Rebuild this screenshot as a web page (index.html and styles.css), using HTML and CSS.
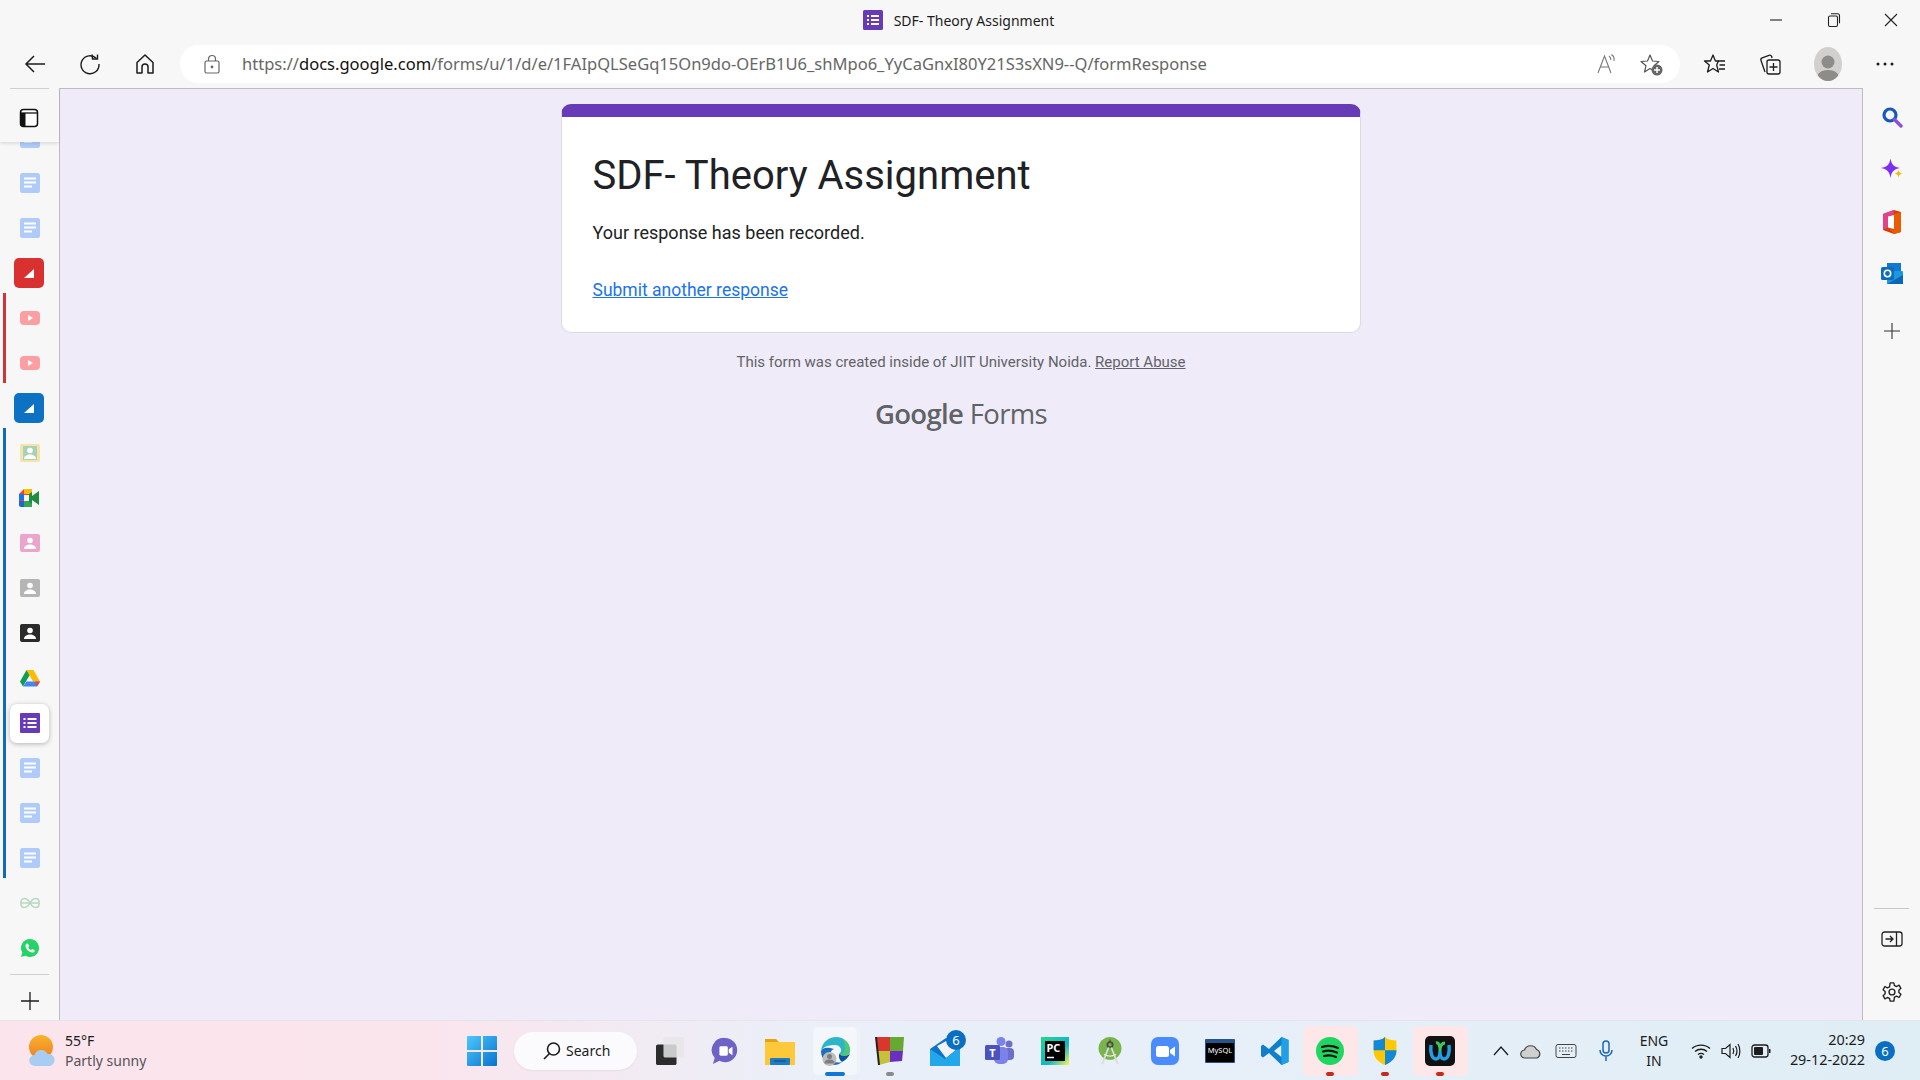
FILE: index.html
```html
<!DOCTYPE html>
<html lang="en">
<head>
  <meta charset="UTF-8" />
  <title>SDF- Theory Assignment</title>
  <link rel="stylesheet" href="styles.css">
</head>
<body>

  <!-- icons used more than once -->
  <svg class="sprite" xmlns="http://www.w3.org/2000/svg">
    <symbol id="i-doc" viewBox="0 0 20 20">
      <rect width="20" height="20" rx="2.5" fill="#aecbfa"/>
      <path d="M4 5.5h12M4 9.5h12M4 13.5h8" stroke="#fff" stroke-width="2"/>
    </symbol>
    <symbol id="i-tube" viewBox="0 0 20 14">
      <rect width="20" height="14" rx="4" fill="#fb9fa3"/>
      <path d="M8 4l5 3-5 3z" fill="#fff"/>
    </symbol>
    <symbol id="i-contact" viewBox="0 0 20 18">
      <rect width="20" height="18" rx="2" fill="currentColor"/>
      <circle cx="10" cy="6.5" r="2.8" fill="#fff"/>
      <path d="M4 15c0-3 3-4.5 6-4.5s6 1.500 6 4.500z" fill="#fff"/>
    </symbol>
    <symbol id="i-corner" viewBox="0 0 30 30">
      <rect width="30" height="30" rx="5" fill="currentColor"/>
      <path d="M10 20l10-9v9z" fill="#fff"/>
    </symbol>
  </svg>

  <header class="titlebar">
    <div class="window-title">
      <svg class="ico-20" viewBox="0 0 20 20"><rect width="20" height="20" rx="1.500" fill="#673ab7"/><path d="M8 6h8M8 10h8M8 14h8" stroke="#fff" stroke-width="1.800"/><path d="M4 6h2M4 10h2M4 14h2" stroke="#fff" stroke-width="1.800"/></svg>
      <span>SDF- Theory Assignment</span>
    </div>
    <div class="window-controls">
      <button class="win-btn"><svg class="ico-16" viewBox="0 0 16 16"><path d="M2 8h12" stroke="#222" stroke-width="1.100"/></svg></button>
      <button class="win-btn"><svg class="ico-16" viewBox="0 0 16 16"><rect x="2.500" y="4" width="9" height="10.500" rx="1.500" fill="none" stroke="#222" stroke-width="1.100"/><path d="M5 1.800h6.500a2 2 0 0 1 2 2v7.500" fill="none" stroke="#222" stroke-width="1.100"/></svg></button>
      <button class="win-btn"><svg class="ico-16" viewBox="0 0 16 16"><path d="M2 2l12 12M14 2L2 14" stroke="#222" stroke-width="1.100"/></svg></button>
    </div>
  </header>

  <nav class="toolbar">
    <button class="tool-btn"><svg class="ico-24" viewBox="0 0 24 24" fill="none" stroke="#1c1c1c" stroke-width="1.500"><path d="M22 12H3M11 4l-8 8 8 8"/></svg></button>
    <button class="tool-btn"><svg class="ico-24" viewBox="0 0 24 24" fill="none" stroke="#1c1c1c" stroke-width="1.400"><path d="M18.500 6.500A9 9 0 1 0 21 12"/><path d="M14 2.500l.5 4.500h5V2.500"/></svg></button>
    <button class="tool-btn"><svg class="ico-24" viewBox="0 0 24 24" fill="none" stroke="#1c1c1c" stroke-width="1.500"><path d="M4 21V10.500L12 3l8 7.500V21h-5v-6a3 3 0 0 0-6 0v6z" stroke-linejoin="round"/></svg></button>

    <div class="address">
      <svg class="ico-20" viewBox="0 0 20 20" fill="none" stroke="#666" stroke-width="1.200"><rect x="3" y="7" width="14" height="12" rx="1.500"/><path d="M6.500 7V5a3.500 3.500 0 0 1 7 0v2"/><circle cx="10" cy="13" r=".8" fill="#666"/></svg>
      <div class="url"><span>https://</span><b>docs.google.com</b><span>/forms/u/1/d/e/1FAIpQLSeGq15On9do-OErB1U6_shMpo6_YyCaGnxI80Y21S3sXN9--Q/formResponse</span></div>
      <svg class="ico-24" viewBox="0 0 24 24" fill="none" stroke="#777" stroke-width="1.100"><path d="M3 21L9.500 4 16 21M5.500 15h8"/><path d="M14 4c1.500 1 2 2.500 1.800 4M16.500 2.500c2.200 1.500 3 4 2.500 6.500"/></svg>
      <svg class="ico-24" viewBox="0 0 24 24"><path d="M11 3l2.500 6 6.500.5-5 4.200 1.500 6.300L11 16.600 5.500 20 7 13.700 2 9.500 8.500 9z" fill="none" stroke="#555" stroke-width="1.200" stroke-linejoin="round"/><circle cx="18" cy="18" r="5.500" fill="#666"/><path d="M15 18h6M18 15v6" stroke="#fff" stroke-width="1.500"/></svg>
    </div>

    <div class="tool-group">
      <button class="tool-btn"><svg class="ico-24" viewBox="0 0 24 24" fill="none" stroke="#1c1c1c" stroke-width="1.300"><path d="M10 3l2.400 6h3l-1.700 4 1.800 7L10 16.500 4.500 20l1.800-7L1.500 9h6z" stroke-linejoin="round"/><path d="M15 9h7M16.500 13h5.500M16 17h6"/></svg></button>
      <button class="tool-btn tool-narrow"><svg class="ico-24" viewBox="0 0 24 24" fill="none" stroke="#1c1c1c" stroke-width="1.300"><rect x="9" y="8" width="13" height="14" rx="2"/><path d="M15.500 11v8M11.500 15h8"/><path d="M7 20L3 8.500c-.4-1.200 0-2.200 1.200-2.600L11 3.300c1.200-.4 2.200.2 2.700 1.200L14 6"/></svg></button>
      <div class="avatar"><svg viewBox="0 0 28 30"><circle cx="14" cy="11" r="6.500" fill="#8e8c89"/><path d="M2 30c0-8 6-11 12-11s12 3 12 11z" fill="#8e8c89"/></svg></div>
      <button class="tool-btn"><svg class="ico-24" viewBox="0 0 24 24" fill="#1c1c1c"><circle cx="5" cy="12" r="1.500"/><circle cx="12" cy="12" r="1.500"/><circle cx="19" cy="12" r="1.500"/></svg></button>
    </div>
  </nav>

  <div class="workspace">
    <aside class="sidebar">
      <div class="side-top">
        <svg class="ico-20" viewBox="0 0 20 20"><rect x="1.500" y="1.500" width="17" height="17" rx="3" fill="#fff" stroke="#111" stroke-width="1.500"/><path d="M1.500 5h17" stroke="#111" stroke-width="1.300"/><path d="M1.500 5h5v13.500h-2a3 3 0 0 1-3-3z" fill="#111"/></svg>
      </div>
      <div class="tabs">
        <div class="tab"><svg class="ico-20"><use href="#i-doc"/></svg></div>
        <div class="tab"><svg class="ico-20"><use href="#i-doc"/></svg></div>
        <div class="tab"><svg class="ico-20"><use href="#i-doc"/></svg></div>
        <div class="tab"><svg class="ico-30 c-red"><use href="#i-corner"/></svg></div>
        <div class="tab-group group-red">
          <div class="tab"><svg class="ico-tube"><use href="#i-tube"/></svg></div>
          <div class="tab"><svg class="ico-tube"><use href="#i-tube"/></svg></div>
        </div>
        <div class="tab"><svg class="ico-30 c-blue"><use href="#i-corner"/></svg></div>
        <div class="tab-group group-blue">
          <div class="tab"><svg class="ico-contact c-sand" viewBox="0 0 20 18"><rect width="20" height="18" rx="2" fill="#f5e3a8"/><rect x="3" y="2" width="14" height="14" fill="#a8d1b8"/><circle cx="10" cy="6.500" r="2.800" fill="#fff"/><path d="M4 15c0-3 3-4.500 6-4.500s6 1.500 6 4.500z" fill="#fff"/></svg></div>
          <div class="tab"><svg class="ico-22" viewBox="0 0 22 18"><path d="M5 0h8v6H5v6H0V5z" fill="#ea4335"/><path d="M5 0h8v5H5z" fill="#fbbc04"/><path d="M0 5h5v6H0z" fill="#1a73e8"/><path d="M0 12h5v6H2a2 2 0 0 1-2-2z" fill="#1967d2"/><path d="M5 12h8v6H5z" fill="#34a853"/><path d="M13 3v12l-3-2V5zM13 7l7-5v14l-7-5z" fill="#1e8e3e"/></svg></div>
          <div class="tab"><svg class="ico-contact c-pink"><use href="#i-contact"/></svg></div>
          <div class="tab"><svg class="ico-contact c-grey"><use href="#i-contact"/></svg></div>
          <div class="tab"><svg class="ico-contact c-dark"><use href="#i-contact"/></svg></div>
          <div class="tab"><svg class="ico-20" viewBox="0 0 20 18"><path d="M6.500 1L0 12.500l3 5L10 5.500z" fill="#0f9d58"/><path d="M6.500 1h7L20 12.500h-7z" fill="#fbbc04"/><path d="M3 17.500h14l3-5H6.500z" fill="#4285f4"/><path d="M17 17.500l3-5h-5z" fill="#ea4335"/></svg></div>
          <div class="tab tab-active"><svg class="ico-20" viewBox="0 0 20 20"><rect width="20" height="20" fill="#673ab7" rx="1"/><path d="M7.500 6h9M7.500 10h9M7.500 14h9M3.500 6h2M3.500 10h2M3.500 14h2" stroke="#fff" stroke-width="2"/></svg></div>
          <div class="tab"><svg class="ico-20"><use href="#i-doc"/></svg></div>
          <div class="tab"><svg class="ico-20"><use href="#i-doc"/></svg></div>
          <div class="tab"><svg class="ico-20"><use href="#i-doc"/></svg></div>
        </div>
        <div class="tab"><svg class="ico-20" viewBox="0 0 20 12" fill="none" stroke="#b5d8c0" stroke-width="1.500"><path d="M10 6C8 2 5.500 1.500 4 1.500 2 1.500.8 3.500.8 6s1.200 4.500 3.200 4.500c1.500 0 4-.5 6-4.500 2-4 4.500-4.500 6-4.500 2 0 3.200 2 3.200 4.500s-1.200 4.500-3.200 4.500c-1.500 0-4-.5-6-4.500z"/><path d="M1 6h18"/></svg></div>
        <div class="tab"><svg class="ico-20" viewBox="0 0 20 20"><path d="M10 1a9 9 0 0 0-7.700 13.600L1 19l4.500-1.200A9 9 0 1 0 10 1z" fill="#25d366"/><path d="M7 5.500c-.5 0-1.500.8-1.500 2.300 0 3 3.500 6.700 6.800 6.700 1.500 0 2.500-1 2.500-1.800 0-.5-2-1.700-2.500-1.700-.4 0-.8 1-1.300 1-.8 0-2.800-1.800-2.800-2.700 0-.5.900-.8.900-1.300 0-.4-1-2.500-2.100-2.500z" fill="#fff"/></svg></div>
      </div>
      <div class="side-bottom">
        <svg class="ico-20" viewBox="0 0 20 20"><path d="M10 1v18M1 10h18" stroke="#1c1c1c" stroke-width="1.300"/></svg>
      </div>
    </aside>

    <main class="content">
      <section class="card">
        <h1>SDF- Theory Assignment</h1>
        <p class="confirm">Your response has been recorded.</p>
        <a class="again" href="#">Submit another response</a>
      </section>
      <p class="form-note">This form was created inside of JIIT University Noida. <a href="#">Report Abuse</a></p>
      <div class="forms-logo"><b>Google</b> Forms</div>
    </main>

    <aside class="rail">
      <div class="rail-item"><svg class="ico-22" viewBox="0 0 22 22"><circle cx="9" cy="9" r="6" fill="none" stroke="#1558c0" stroke-width="3.200"/><path d="M13.500 13.500L20 20" stroke="#8b4fd8" stroke-width="3.400" stroke-linecap="round"/></svg></div>
      <div class="rail-item"><svg class="ico-22" viewBox="0 0 22 21"><path d="M9.500 0C10.500 6 13 8.500 19 9.500 13 10.500 10.500 13 9.500 19.500 8.500 13 6 10.500 0 9.500 6 8.500 8.500 6 9.500 0z" fill="#7b2ff2"/><path d="M17.500 11.500c.3 2 1 2.700 4 3.500-3 .8-3.700 1.500-4 4.500-.3-3-1-3.700-4-4.500 3-.8 3.700-1.500 4-3.500z" fill="#f7b500"/></svg></div>
      <div class="rail-item"><svg class="ico-office" viewBox="0 0 20 24"><path d="M12 0L1 4v16l11 4 7-2V2z" fill="#d83b01"/><path d="M1 4l11-4v4L6 6.500v11L1 20z" fill="#e3418a"/><path d="M12 4v16l-6-2.500 6 6.500 7-2V2z" fill="#eb5b00"/><path d="M6 6.500L12 5v14l-6-1.500z" fill="#fff"/></svg></div>
      <div class="rail-item"><svg class="ico-22" viewBox="0 0 22 22"><rect x="6" y="0" width="14" height="9" fill="#0f78d4"/><rect x="6" y="8" width="16" height="13" rx="1" fill="#1a9ade"/><path d="M6 21l16-9v9z" fill="#0a66b8"/><rect x="0" y="4" width="13" height="13" rx="1.500" fill="#0f6cbd"/><circle cx="6.500" cy="10.500" r="3.200" fill="none" stroke="#fff" stroke-width="1.600"/></svg></div>
      <div class="rail-item rail-plus"><svg class="ico-16" viewBox="0 0 16 16"><path d="M8 0v16M0 8h16" stroke="#333" stroke-width="1.100"/></svg></div>
      <div class="rail-bottom">
        <div class="rail-item"><svg class="ico-22" viewBox="0 0 22 18" fill="none" stroke="#222" stroke-width="1.300"><rect x="1" y="2" width="20" height="14" rx="2.500"/><path d="M15.500 2v14"/><path d="M4.500 9h7M9 6l3 3-3 3"/></svg></div>
        <div class="rail-item"><svg class="ico-22" viewBox="0 0 24 24" fill="none" stroke="#222" stroke-width="1.500"><circle cx="12" cy="12" r="3.200"/><path d="M10 2h4l.7 3 2.300 1 2.700-1.500 2 3.500-2.200 2v2.500l2.200 2-2 3.500-2.700-1.500-2.300 1L14 22h-4l-.7-3-2.300-1-2.700 1.500-2-3.500 2.200-2V11.500L2.300 9.500l2-3.500L7 7.500l2.300-1z" stroke-linejoin="round"/></svg></div>
      </div>
    </aside>
  </div>

  <footer class="taskbar">
    <div class="weather">
      <svg class="ico-weather" viewBox="0 0 28 32"><defs><linearGradient id="sun" x1="0" y1="0" x2="0" y2="1"><stop offset="0" stop-color="#f9b22c"/><stop offset="1" stop-color="#ee7f22"/></linearGradient></defs><circle cx="13" cy="12" r="12" fill="url(#sun)"/><path d="M7 31a5.500 5.500 0 0 1-.5-11 7 7 0 0 1 13-1 6 6 0 0 1 2 12z" fill="#a8cdf2"/></svg>
      <div class="weather-text"><span class="temp">55°F</span><span class="sky">Partly sunny</span></div>
    </div>
    <svg class="start" viewBox="0 0 30 30"><defs><linearGradient id="winblue" x1="0" y1="0" x2="1" y2="1"><stop offset="0" stop-color="#4dc8fb"/><stop offset="1" stop-color="#0672d0"/></linearGradient></defs><path d="M0 1a1 1 0 0 1 1-1h13v14H0zM16 0h13a1 1 0 0 1 1 1v13H16zM0 16h14v14H1a1 1 0 0 1-1-1zM16 16h14v13a1 1 0 0 1-1 1H16z" fill="url(#winblue)"/></svg>
    <div class="search-pill">
      <svg class="ico-20" viewBox="0 0 20 20" fill="none" stroke="#1c1c1c" stroke-width="1.600"><circle cx="11.500" cy="8" r="6"/><path d="M7.500 12.500L2 18"/></svg>
      <span>Search</span>
    </div>

    <div class="apps">
      <div class="app"><svg class="ico-28" viewBox="0 0 30 30"><rect x="0" y="8" width="22" height="22" rx="2" fill="#2c2c2c"/><rect x="8" y="0" width="22" height="22" rx="2" fill="#e6e6e6" opacity=".85"/></svg></div>
      <div class="app"><svg class="ico-28" viewBox="0 0 28 30"><path d="M14 1a13 13 0 1 1-6 24.500L1 29l2-6.500A13 13 0 0 1 14 1z" fill="#6f62c7"/><rect x="8" y="10" width="9" height="10" rx="1.500" fill="#fff"/><path d="M18 13l4-2.500v9L18 17z" fill="#fff"/></svg></div>
      <div class="app"><svg class="ico-30" viewBox="0 0 30 28"><path d="M0 2h11l3 3h16v23H0z" fill="#e3a40c"/><rect y="5" width="30" height="23" fill="#fdc83a"/><rect x="5" y="21" width="20" height="7" rx="1" fill="#1f7bc4"/><path d="M9 24h12" stroke="#0c4f89" stroke-width="1.200"/></svg></div>
      <div class="app app-open">
        <svg class="ico-30" viewBox="0 0 30 30"><path d="M1 15C2 6 9 1 16 1c8 0 14 6 14 13 0 4-3 6-6 6-2.500 0-4-1-4-3 3-3 0-8-5-8C8 9 3 11 1 15z" fill="#2bb5c8"/><path d="M22 3c5 2 8 6 8 11 0 4-3 6-6 6-2 0-3.500-.7-4-2 3 0 5-3 5-6 0-4-1-7-3-9z" fill="#52c873"/><path d="M1 15c0 9 7 14 13 14 3 0 6-1 8-3-7 2-12-2-12-7 0-2 1-5 4-6C8 11 3 11 1 15z" fill="#1b6fbf"/><path d="M22 26c4-2 7-5 8-9-2 3-5 3-6 3-3 0-4-1-4-3-2 2-1 7 2 9z" fill="#0d539b"/><circle cx="9.500" cy="23" r="7" fill="#bdbdbd"/><circle cx="9.500" cy="20.500" r="2.500" fill="#7d7d7d"/><path d="M4.500 27.500c0-3 2-4 5-4s5 1 5 4z" fill="#7d7d7d"/></svg>
      </div>
      <div class="app app-dot"><svg class="ico-30" viewBox="0 0 30 30"><path d="M1 1h14v14H2z" fill="#d9372d"/><path d="M15 1h14l-1 14H15z" fill="#65a832"/><path d="M2 15h13v11l-11 3z" fill="#c5c138"/><path d="M15 15h13l-1 10-12 1z" fill="#6a2fc1"/><path d="M1 1l3 28" stroke="#222" stroke-width="2"/></svg></div>
      <div class="app">
        <svg class="ico-30" viewBox="0 0 30 30"><path d="M0 13L16 2l14 11v17H0z" fill="#0b74c8"/><path d="M7 10l11-6 9 9-11 9z" fill="#f1f1f1"/><path d="M0 13l15 10 15-12v19H0z" fill="#22a7ea"/></svg>
        <span class="app-badge">6</span>
      </div>
      <div class="app"><svg class="ico-30" viewBox="0 0 30 30"><circle cx="24" cy="8" r="3.500" fill="#6a70c9"/><circle cx="16" cy="5.500" r="4.500" fill="#7b83eb"/><rect x="19" y="12" width="10" height="12" rx="4" fill="#6a70c9"/><rect x="9" y="11" width="14" height="17" rx="5" fill="#7b83eb"/><rect x="0" y="9" width="15" height="15" rx="1.500" fill="#4b53bc"/><text x="7.500" y="21" class="svg-t">T</text></svg></div>
      <div class="app"><svg class="ico-28" viewBox="0 0 28 28"><defs><linearGradient id="pc" x1="0" y1="0" x2="1" y2="1"><stop offset="0" stop-color="#21d789"/><stop offset=".6" stop-color="#0fb7c9"/><stop offset="1" stop-color="#fcf84a"/></linearGradient></defs><rect width="28" height="28" fill="url(#pc)"/><rect x="4" y="4" width="20" height="20" fill="#000"/><text x="5.500" y="15" class="svg-pc">PC</text><path d="M6 20.500h7" stroke="#fff" stroke-width="1.500"/></svg></div>
      <div class="app"><svg class="ico-30" viewBox="0 0 30 34"><circle cx="15" cy="14" r="13" fill="#79b54a"/><path d="M15 4v3" stroke="#4c4c4c" stroke-width="1.500"/><circle cx="15" cy="10" r="3" fill="none" stroke="#4c4c4c" stroke-width="2"/><path d="M13.500 13l-7.500 19M16.500 13l7.500 19" stroke="#dcdcdc" stroke-width="2"/><path d="M8 21c4 2 10 2 14 0" fill="none" stroke="#e8e8e8" stroke-width="1.500"/></svg></div>
      <div class="app"><svg class="ico-28" viewBox="0 0 28 28"><rect width="28" height="28" rx="7" fill="#4a8cff"/><rect x="5" y="9" width="13" height="11" rx="2.500" fill="#fff"/><path d="M19 13l5-3.500v10L19 16z" fill="#fff"/></svg></div>
      <div class="app"><svg class="ico-mysql" viewBox="0 0 30 24"><rect width="30" height="24" rx="1" fill="#26538a"/><rect x="1" y="4" width="28" height="19" fill="#000"/><text x="15" y="14" class="svg-sql">MySQL</text></svg></div>
      <div class="app"><svg class="ico-30" viewBox="0 0 30 30"><path fill-rule="evenodd" d="M21.500 1L9 13 3 8.500 1 10v10l2 1.500L9 17l12.500 12 7-3V4zM21.500 9v12L14 15z" fill="#0f7fcc"/><path fill-rule="evenodd" d="M21.500 1l7 3v22l-7 3V21z" fill="#1fa0e8"/></svg></div>
      <div class="app app-alert app-tile"><svg class="ico-28" viewBox="0 0 28 28"><circle cx="14" cy="14" r="14" fill="#1ed760"/><path d="M6 10c6-2 11-1.500 16 1M7 14.500c5-1.500 9-1 14 1M8 19c4-1 8-.8 12 1" fill="none" stroke="#111" stroke-width="2.200" stroke-linecap="round"/></svg></div>
      <div class="app app-alert"><svg class="ico-28" viewBox="0 0 28 32"><path d="M14 0c3 3 8 4 13 4v12c0 8-6 13-13 16C7 29 1 24 1 16V4c5 0 10-1 13-4z" fill="#fdc800"/><path d="M14 0v15H1V4c5 0 10-1 13-4zM14 15h13v1c0 8-6 13-13 16z" fill="#1089d8"/></svg></div>
      <div class="app app-alert app-tile"><svg class="ico-30" viewBox="0 0 30 30"><rect width="30" height="30" rx="5" fill="#111"/><path d="M11 7c3-1 4 3 4 8 0-5 2-8 5-8" fill="none" stroke="#3ec65b" stroke-width="3"/><path d="M6 9c-1 8 1 14 5 14 3 0 4-3 4-8 0 5 1 8 4 8 4 0 6-6 5-14" fill="none" stroke="#1f9fe8" stroke-width="3.400"/></svg></div>
    </div>

    <div class="tray">
      <div class="tray-cell w-30"><svg class="ico-16" viewBox="0 0 16 16"><path d="M1 12l7-8 7 8" fill="none" stroke="#1c1c1c" stroke-width="1.300"/></svg></div>
      <div class="tray-cell w-30"><svg class="ico-22" viewBox="0 0 22 16"><path d="M5 15a4 4 0 0 1-.5-8 6.500 6.500 0 0 1 12-.5A4.500 4.500 0 0 1 17 15z" fill="#cfcfcf" stroke="#444" stroke-width="1.200"/></svg></div>
      <div class="tray-cell w-40"><svg class="ico-22" viewBox="0 0 22 16" fill="none" stroke="#444" stroke-width="1"><rect x="1" y="1.500" width="20" height="13" rx="2"/><path d="M4 5h14M4 8h14" stroke-dasharray="1.500 1.500"/><path d="M7 11.500h8"/></svg></div>
      <div class="tray-cell w-40"><svg class="ico-22" viewBox="0 0 22 22" fill="none" stroke="#1c68b8" stroke-width="1.500"><rect x="8" y="1" width="6" height="12" rx="3"/><path d="M5 10a6 6 0 0 0 12 0M11 16v5"/></svg></div>
      <div class="tray-cell w-56 lang"><span>ENG</span><span>IN</span></div>
      <div class="tray-cell w-38"><svg class="ico-20" viewBox="0 0 20 16" fill="none" stroke="#1c1c1c" stroke-width="1.400"><path d="M1 5.500c5-4.500 13-4.500 18 0M4 8.500c3.500-3 8.500-3 12 0M7 11.500c2-1.500 4-1.500 6 0"/><circle cx="10" cy="14" r="1" fill="#1c1c1c"/></svg></div>
      <div class="tray-cell w-22"><svg class="ico-20" viewBox="0 0 20 18" fill="none" stroke="#1c1c1c" stroke-width="1.200"><path d="M1 6.500h3.500L9 2.500v13l-4.500-4H1z"/><path d="M12 6c1 2 1 4 0 6M14.500 4c1.800 3 1.800 7 0 10M17 2c2.500 4 2.500 10 0 14"/></svg></div>
      <div class="tray-cell w-38"><svg class="ico-20" viewBox="0 0 20 14"><rect x="1" y="1" width="16" height="12" rx="2.500" fill="none" stroke="#1c1c1c" stroke-width="1.300"/><rect x="3" y="3" width="9" height="8" rx="1" fill="#1c1c1c"/><path d="M18 5h1.500v4H18z" fill="#1c1c1c"/></svg></div>
      <div class="clock"><span>20:29</span><span>29-12-2022</span></div>
      <span class="notif">6</span>
    </div>
  </footer>

</body>
</html>
```

FILE: styles.css
```css
* {
  box-sizing: border-box;
}

html, body {
  margin: 0;
  height: 100%;
}

body {
  display: flex;
  flex-direction: column;
  height: 1080px;
  overflow: hidden;
  background-color: #f7f7f7;
  font-family: "Noto Sans", sans-serif;
  color: #1c1c1c;
}

svg {
  display: block;
  flex: none;
}

button {
  display: flex;
  align-items: center;
  justify-content: center;
  padding: 0;
  background: none;
  border: none;
}

.sprite {
  width: 0;
  height: 0;
  position: absolute;
}

.ico-16 { width: 16px; height: 16px; }
.ico-20 { width: 20px; height: 20px; }
.ico-22 { width: 22px; height: 22px; }
.ico-24 { width: 24px; height: 24px; }
.ico-28 { width: 28px; height: 28px; }
.ico-30 { width: 30px; height: 30px; }
.ico-tube { width: 20px; height: 14px; }
.ico-contact { width: 20px; height: 18px; }
.ico-weather { width: 28px; height: 32px; }
.ico-office { width: 20px; height: 24px; }
.ico-mysql { width: 30px; height: 24px; }

/* barre de titre */
.titlebar {
  display: grid;
  grid-template-columns: 1fr auto 1fr;
  height: 40px;
  flex: none;
}

.window-title {
  grid-column: 2;
  display: flex;
  align-items: center;
  gap: 11px;
  padding-right: 3px;
  font-size: 14px;
}

.window-controls {
  grid-column: 3;
  display: flex;
  justify-content: flex-end;
}

.win-btn {
  width: 57.5px;
  height: 40px;
}

/* barre d'outils */
.toolbar {
  display: flex;
  align-items: center;
  height: 48px;
  flex: none;
  padding: 0 7px 0 7.5px;
}

.tool-btn {
  width: 55px;
  height: 38px;
}

.address {
  flex: 1;
  display: flex;
  align-items: center;
  gap: 20px;
  height: 38px;
  margin-left: 7.5px;
  padding: 0 17px 0 22px;
  background: #ffffff;
  border-radius: 19px;
}

.url {
  flex: 1;
  padding-bottom: 2px;
  font-size: 16.55px;
  white-space: nowrap;
  color: #666666;
}

.url b {
  font-weight: 400;
  color: #111111;
}

.tool-group {
  display: flex;
  align-items: center;
  margin-left: 7px;
}

.tool-group .tool-btn {
  width: 56px;
}

.tool-group .tool-narrow {
  width: 54px;
}

.avatar {
  width: 28px;
  height: 34px;
  margin: 0 15px 0 17px;
  border-radius: 50%;
  background: #d2d0ce;
  overflow: hidden;
  display: flex;
  align-items: flex-end;
}

/* zone principale */
.workspace {
  flex: 1;
  display: flex;
  min-height: 0;
}

.sidebar {
  width: 59px;
  flex: none;
  display: flex;
  flex-direction: column;
}

.side-top {
  height: 54px;
  flex: none;
  display: flex;
  justify-content: center;
  padding: 20px 1px 0 0;
  position: relative;
  z-index: 1;
  background: #f7f7f7;
  box-shadow: 0 2px 3px rgba(0,0,0,0.1);
}

.side-top::before {
  content: "";
  position: absolute;
  top: 0;
  left: 10px;
  right: 10px;
  height: 1px;
  background: #d0d0d0;
}

.tabs {
  flex: 1;
  min-height: 0;
  display: flex;
  flex-direction: column;
  justify-content: flex-end;
  overflow: hidden;
}

.tab {
  height: 45px;
  flex: none;
  display: flex;
  align-items: center;
  justify-content: center;
}

.tab .ico-30 {
  margin-right: 2px;
}

/* trait de couleur d'un groupe d'onglets */
.tab-group {
  flex: none;
  position: relative;
}

.tab-group::before {
  content: "";
  position: absolute;
  left: 3px;
  top: -3px;
  bottom: 3px;
  width: 3px;
}

.group-red::before { background: #d13438; }
.group-blue::before { background: #0f6cbd; }

.tab-active {
  position: relative;
}

.tab-active::before {
  content: "";
  position: absolute;
  left: 10px;
  top: 3px;
  width: 39px;
  height: 39px;
  background: #ffffff;
  border-radius: 7px;
  box-shadow: 0 1px 5px rgba(0,0,0,0.28);
}

.tab-active svg {
  position: relative;
}

.c-red { color: #d93030; }
.c-blue { color: #0e72c4; }
.c-pink { color: #eba5cc; }
.c-grey { color: #b5b5b5; }
.c-dark { color: #2b2b2b; }

.side-bottom {
  height: 46.5px;
  flex: none;
  margin: 3px 10px 0;
  border-top: 1px solid #cfcfcf;
  display: flex;
  justify-content: center;
  padding-top: 16px;
}

.content {
  flex: 1;
  display: flex;
  flex-direction: column;
  align-items: center;
  background: #f0ebf8;
  border: 1px solid #bdbdbd;
  border-bottom: none;
  padding-top: 15px;
}

.card {
  width: 800px;
  background: #ffffff;
  border: 1px solid #dadce0;
  border-top: 13px solid #673ab7;
  border-radius: 10px;
  padding: 35px 30.5px 30px;
  font-family: Roboto, sans-serif;
}

.card h1 {
  margin: 0;
  font-size: 40px;
  line-height: 48px;
  font-weight: 400;
  color: #202124;
}

.confirm {
  margin: 21px 0 0;
  font-size: 18px;
  line-height: 24px;
  color: #202124;
}

.again {
  display: block;
  margin-top: 33px;
  font-size: 17.5px;
  line-height: 24px;
  color: #1a73e8;
}

.form-note {
  margin: 19px 0 0;
  font-family: Roboto, sans-serif;
  font-size: 15px;
  line-height: 20px;
  color: #5f6368;
}

.form-note a {
  color: #5f6368;
}

.forms-logo {
  margin-top: 25px;
  font-family: "Open Sans", sans-serif;
  font-size: 27.5px;
  line-height: 34px;
  letter-spacing: -0.65px;
  color: #5f6368;
}

.forms-logo b {
  font-weight: 600;
}

/* panneau droit */
.rail {
  width: 57px;
  flex: none;
  display: flex;
  flex-direction: column;
  align-items: center;
  padding-top: 2.5px;
}

.rail-item {
  height: 52.5px;
  flex: none;
  display: flex;
  align-items: center;
  justify-content: center;
}

.rail-plus {
  height: 60px;
}

.rail-bottom {
  margin-top: auto;
  width: 35px;
  border-top: 1px solid #c8c8c8;
  padding-top: 4px;
  padding-bottom: 2px;
}

/* barre des tâches */
.taskbar {
  height: 60px;
  flex: none;
  display: flex;
  align-items: center;
  background: linear-gradient(90deg, #fbe4ec 0%, #fbe5ed 22%, #eaeff8 42%, #e6eff8 70%, #dfedf5 100%);
  border-top: 1px solid #e6e3ea;
}

.weather {
  width: 467px;
  flex: none;
  display: flex;
  align-items: center;
  gap: 9px;
  padding-left: 28px;
}

.weather-text {
  display: flex;
  flex-direction: column;
  font-size: 14px;
  line-height: 20px;
}

.sky {
  color: #555555;
}

.start {
  width: 30px;
  height: 30px;
}

.search-pill {
  width: 123px;
  height: 38px;
  margin-left: 17px;
  display: flex;
  align-items: center;
  gap: 4px;
  padding-left: 28px;
  background: #fbfbfd;
  border-radius: 19px;
  font-size: 14px;
  box-shadow: 0 1px 2px rgba(0,0,0,0.06);
}

.apps {
  display: flex;
  margin-left: 5.5px;
}

.app {
  width: 55px;
  height: 50px;
  display: flex;
  align-items: center;
  justify-content: center;
  position: relative;
}

.app-open::before {
  content: "";
  position: absolute;
  left: 5px;
  top: 1px;
  width: 44px;
  height: 48px;
  background: #f3f6fb;
  border-radius: 5px;
  box-shadow: 3px 0 0 #eef2f8;
}

.app-open svg {
  position: relative;
}

.app-open::after,
.app-dot::after,
.app-alert::after {
  content: "";
  position: absolute;
  bottom: 0;
  left: 50%;
  width: 8px;
  height: 4px;
  margin-left: -4px;
  border-radius: 2px;
  background: #8a8a8a;
}

.app-open::after {
  width: 20px;
  margin-left: -10px;
  background: #0f78d4;
}

.app-alert::after {
  background: #c42b1c;
}

.app-tile {
  background: #fde7e9;
  border-radius: 5px;
}

.app-badge {
  position: absolute;
  top: 4px;
  right: 6.5px;
  width: 20px;
  height: 20px;
  border-radius: 50%;
  background: #0a6fc2;
  color: #ffffff;
  font-size: 13px;
  line-height: 20px;
  text-align: center;
}

.svg-t {
  font: 700 11px "Noto Sans", sans-serif;
  fill: #ffffff;
  text-anchor: middle;
}

.svg-pc {
  font: 700 11px "Noto Sans", sans-serif;
  fill: #ffffff;
}

.svg-sql {
  font: 400 7.5px "Noto Sans", sans-serif;
  fill: #ffffff;
  text-anchor: middle;
}

.tray {
  margin-left: auto;
  padding-right: 25px;
  display: flex;
  align-items: center;
  font-size: 14px;
}

.tray-cell {
  display: flex;
  align-items: center;
  justify-content: center;
}

.w-22 { width: 22px; }
.w-30 { width: 30px; }
.w-38 { width: 38px; }
.w-40 { width: 40px; }
.w-56 { width: 56px; }

.lang {
  flex-direction: column;
  line-height: 20px;
}

.clock {
  width: 85px;
  padding-bottom: 2px;
  display: flex;
  flex-direction: column;
  align-items: flex-end;
  font-size: 14.4px;
  line-height: 20px;
  white-space: nowrap;
}

.notif {
  width: 20px;
  height: 20px;
  margin-left: 10px;
  border-radius: 50%;
  background: #0a6fc2;
  color: #ffffff;
  font-size: 13px;
  line-height: 20px;
  text-align: center;
}
```
